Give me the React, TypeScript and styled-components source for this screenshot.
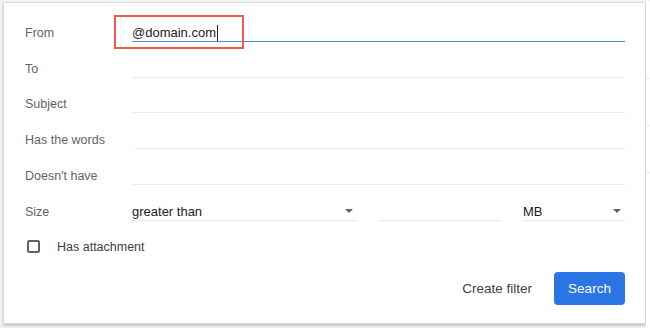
import React from 'react';
import styled, { createGlobalStyle } from 'styled-components';

const GlobalStyle = createGlobalStyle`
  body {
    margin: 0;
    background: #f1f3f4;
    font-family: "Liberation Sans", Arial, sans-serif;
  }
`;

const Page = styled.div`
  display: flex;
  width: 650px;
  height: 328px;
  overflow: hidden;
  padding: 2px 0 0 3px;
  box-sizing: border-box;
`;

const Dialog = styled.div`
  width: 643px;
  height: 322px;
  flex-shrink: 0;
  box-sizing: border-box;
  background: #fff;
  border: 1px solid #d6d8db;
  box-shadow: 0 2px 2px rgba(0, 0, 0, 0.18);
  padding: 12px 20px 0 21px;
  display: flex;
  flex-direction: column;
`;

const SideStrip = styled.div`
  flex: 1;
  background: #fff;
  overflow: hidden;
  display: flex;
  flex-direction: column;
  padding-top: 76px;
  gap: 46px;
`;

const SideLine = styled.div`
  height: 1px;
  background: #e8eaed;
`;

const Row = styled.div`
  display: flex;
  align-items: center;
  height: 36px;
`;

const TightRow = styled(Row)`
  height: 35px;
`;

const Label = styled.div`
  width: 107px;
  flex-shrink: 0;
  font-size: 12.5px;
  color: #5f6368;
`;

const Field = styled.div<{ $inset?: number; $width?: number }>`
  position: relative;
  flex: ${(p) => (p.$width ? `0 0 ${p.$width}px` : '1')};
  margin-left: ${(p) => p.$inset ?? 0}px;
  height: 17px;
  line-height: 17px;
  font-size: 13px;
  color: #202124;
  border-bottom: 1px solid #e8eaed;
  display: flex;
  align-items: center;
`;

const ActiveField = styled(Field)`
  border-bottom-color: #4a8af4;
`;

const Caret = styled.span`
  display: inline-block;
  width: 1px;
  height: 16px;
  background: #202124;
  margin-left: 1px;
`;

const Highlight = styled.div`
  position: absolute;
  left: -18px;
  top: -9px;
  width: 130px;
  height: 34px;
  box-sizing: border-box;
  border: 2px solid #ef5a50;
`;

const SelectValue = styled.span`
  flex: 1;
`;

const Arrow = styled.span`
  width: 0;
  height: 0;
  border-left: 4px solid transparent;
  border-right: 4px solid transparent;
  border-top: 4px solid #5f6368;
  margin-right: 4px;
`;

const CheckRow = styled.label`
  display: flex;
  align-items: center;
  height: 35px;
  padding-left: 2px;
  gap: 17px;
  font-size: 12.5px;
  color: #3c4043;
`;

const Checkbox = styled.span`
  width: 13px;
  height: 13px;
  box-sizing: border-box;
  border: 2px solid #5f6368;
  border-radius: 2px;
`;

const Actions = styled.div`
  display: flex;
  justify-content: flex-end;
  align-items: center;
  gap: 22px;
  margin-top: 8px;
`;

const TextButton = styled.button`
  border: none;
  background: none;
  padding: 0;
  font-family: inherit;
  font-size: 13.5px;
  color: #3c4043;
`;

const PrimaryButton = styled.button`
  width: 71px;
  height: 33px;
  border: none;
  border-radius: 4px;
  background: #2b74e4;
  color: #fff;
  font-family: inherit;
  font-size: 13.5px;
`;

const App: React.FC = function () {
  return (
    <>
      <GlobalStyle />
      <Page>
        <Dialog>
          <Row>
            <Label>From</Label>
            <ActiveField>
              @domain.com
              <Caret />
              <Highlight />
            </ActiveField>
          </Row>
          <TightRow>
            <Label>To</Label>
            <Field />
          </TightRow>
          <Row>
            <Label>Subject</Label>
            <Field />
          </Row>
          <Row>
            <Label>Has the words</Label>
            <Field $inset={3} />
          </Row>
          <Row>
            <Label>Doesn&apos;t have</Label>
            <Field />
          </Row>
          <TightRow>
            <Label>Size</Label>
            <Field $width={225}>
              <SelectValue>greater than</SelectValue>
              <Arrow />
            </Field>
            <Field $width={122} $inset={22} />
            <Field $inset={22}>
              <SelectValue>MB</SelectValue>
              <Arrow />
            </Field>
          </TightRow>
          <CheckRow>
            <Checkbox />
            Has attachment
          </CheckRow>
          <Actions>
            <TextButton>Create filter</TextButton>
            <PrimaryButton>Search</PrimaryButton>
          </Actions>
        </Dialog>
        <SideStrip>
          <SideLine />
          <SideLine />
          <SideLine />
        </SideStrip>
      </Page>
    </>
  );
};

export default App;
